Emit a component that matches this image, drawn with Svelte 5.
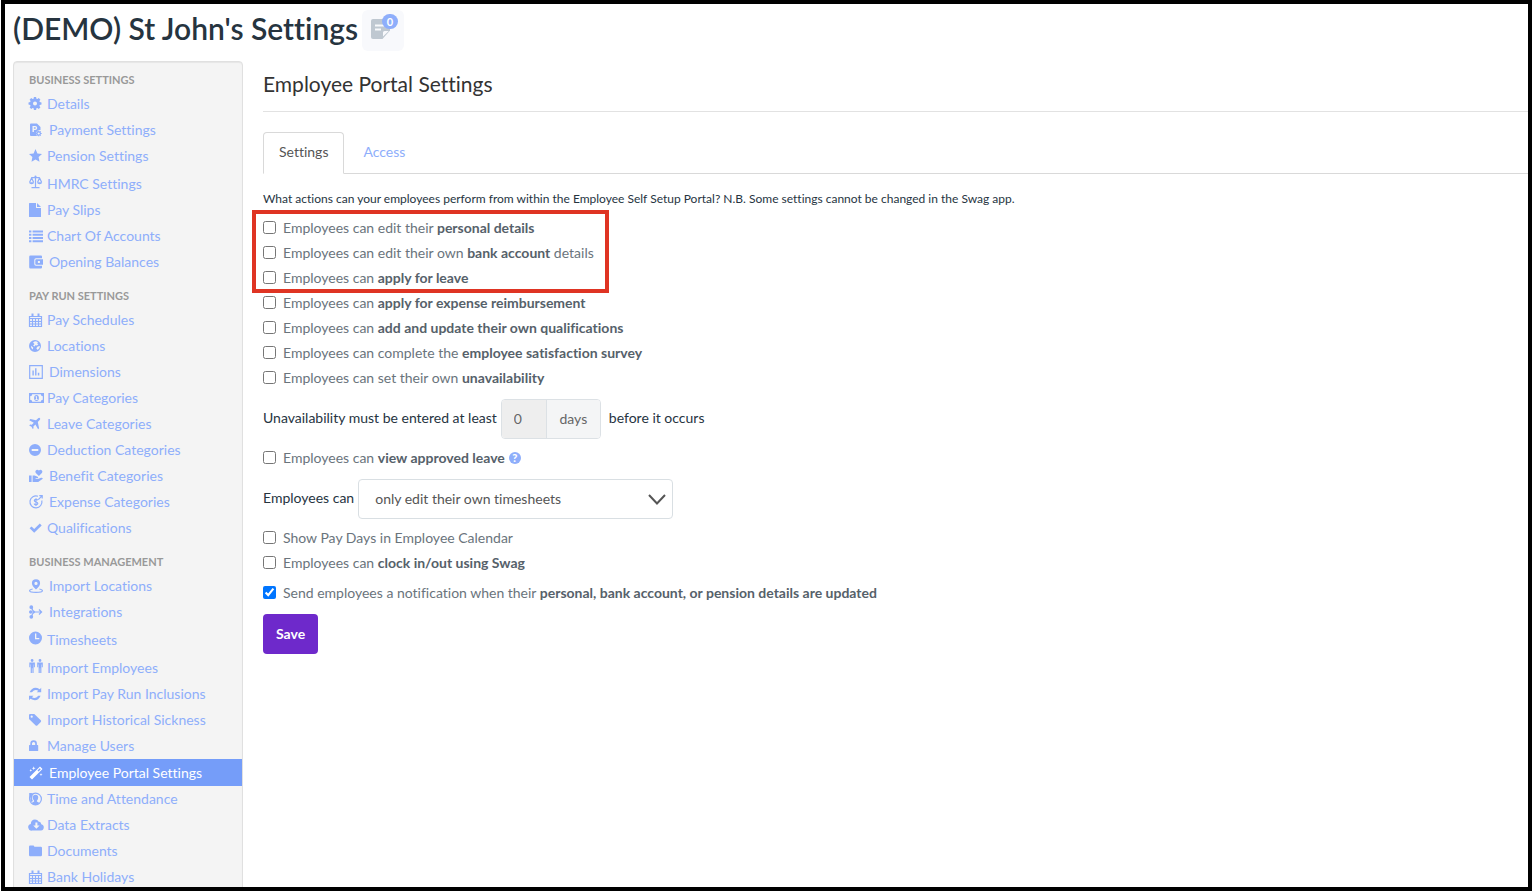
<script>
  // f = filled outline, s = stroked outline, both on a 14px grid
  const icons = {
    cog: { f: 'M4.900 0h2.200l.3 1.700 1 .4 1.400-1 1.600 1.600-1 1.400.4 1 1.700.3v2.200l-1.700.3-.4 1 1 1.400-1.600 1.600-1.400-1-1 .4-.3 1.700H4.900l-.3-1.700-1-.4-1.400 1L.6 10.300l1-1.400-.4-1L-.5 7.600V5.400l1.700-.3.4-1-1-1.400L2.200 1.100l1.400 1 1-.4zM6 4.500a2 2 0 1 0 0 4 2 2 0 0 0 0-4z' },
    payment: { f: 'M1 1.500Q1 .5 2 .5h6l3.500 3.500v3L9.500 7Q7 8 7.200 10.500L7.800 13H2Q1 13 1 12zM3.500 3v6h1.400V7h1.300a2 2 0 0 0 0-4zM4.900 4.200h1.200q.8 0 .8.8t-.8.800H4.900z', s: 'M9.700 8.800a1.700 1.700 0 1 0 0 3.400 1.700 1.700 0 0 0 0-3.400zM9.700 7.600v1M9.700 12.300v1M6.800 10.500h1M11.700 10.500h1M7.700 8.400l.7.7M11 11.900l.7.7M11.700 8.400l-.7.7M8.400 11.900l-.7.7' },
    star: { f: 'M6.500 0l1.900 4.400 4.600.5-3.400 3.200.9 4.700-4-2.400-4 2.400.9-4.700L0 4.900l4.600-.5z' },
    scales: { s: 'M6.500 1v11M2.500 12.600h8M2.200 2.600h8.600M2.600 3L.6 7.200M2.600 3l2 4.200M10.600 3L8.600 7.200M10.600 3l2 4.200', f: 'M0 7.200h5.200Q4.900 9.200 2.600 9.200T0 7.200zM8 7.200h5.200q-.3 2-2.600 2T8 7.200zM5.500 1.500a1 1 0 1 1 2 0 1 1 0 0 1-2 0z' },
    file: { f: 'M0 .6Q0 0 .6 0H7v4.400q0 .6.6.600H12v8.400q0 .6-.6.600H.6q-.6 0-.6-.6zM8 0l4 4H8z' },
    list: { f: 'M0 1.500h2.400v2H0zM3.600 1.500H14v2H3.600zM0 4.800h2.400v2H0zM3.600 4.800H14v2H3.600zM0 8h2.400v2H0zM3.600 8H14v2H3.600zM0 11.200h2.400v2H0zM3.600 11.200H14v2H3.600z' },
    wallet: { f: 'M1.500.5h10.500q1 0 1 1v1.800H7Q5.300 3.300 5.300 5v4q0 1.700 1.700 1.700h6v1.800q0 1-1 1H1.500q-1.300 0-1.300-1.300V1.800Q.2.5 1.500.5zM7.300 4.300H14v5.400H7.300Q6.300 9.700 6.300 8.700V5.300q0-1 1-1zM8.900 5.900v2.200h2V5.900z' },
    calendar: { s: 'M.5 3.500h12v10H.5zM.5 5.500h12M.5 8.500h12M.5 11h12M3.500 5.500v8M6.500 5.500v8M9.500 5.500v8', f: 'M2.500.5h2v3h-2zM8.500.5h2v3h-2z' },
    globe: { f: 'M6 1a6 6 0 1 0 0 12A6 6 0 0 0 6 1zM7 2.200L9 3.200 8 4.500l1.500.4L8 6.500 6.300 6.300 5.600 7.500l-1.500-.8L5.500 5 4 3.500 5.500 2.400zM8.700 7.500l2.200-.5-.4 2-1.800 2-1.400-1.800zM2 6.800l2.200 1.700-.3 1.900-1.600-1.500z' },
    chart: { s: 'M.7.7h12.600v12.600H.7z', f: 'M3.400 5.500h1.400v5H3.400zM6.100 3.300h1.400v7.200H6.100zM8.800 7.800h1.500v2.700H8.800z' },
    money: { w: 15, f: 'M0 2h15v10H0zM3.200 3.300a2 2 0 0 1-2 2v3.400a2 2 0 0 1 2 2h8.600a2 2 0 0 1 2-2V5.300a2 2 0 0 1-2-2zM7.500 4q2.400 0 2.400 3t-2.400 3-2.400-3 2.400-3zM6.600 5.500v.8h.5v1.900h-.8v.8h2.500v-.8H8V5.300h-.8z' },
    plane: { f: 'M11 1.200q.7.700-.3 1.900L8.800 5l1.300 6.200-1 1-2.700-4.700-2 2 .2 1.700-.9.9-1.200-2.300L.2 8.500l.9-.9 1.700.2 2-2L.2 3.200l1.100-1.100L7 3.300l1.900-1.900q1.300-1 2.100-.2z' },
    minus: { f: 'M6 .9a6 6 0 1 0 0 12 6 6 0 0 0 0-12zM2.700 5.900h6.600v2.200H2.700z' },
    benefit: { f: 'M0 6.500h2.600V13H0zM3.600 6.500h2l3 1.200q.8.400.4 1.300H6.600v.8h3L12 8.700q1.500-.3 1.800 1L9.200 13H3.600zM9.900 7L6.800 4q-1-1.300 0-2.600 1.400-1.400 3.100.2 1.700-1.600 3-.2 1.100 1.300 0 2.600z' },
    expense: { s: 'M9 1.200A6 6 0 1 0 12.800 5.500M9.300 4.700L13 .8M10.300.7h2.900v2.900M8.700 5.300Q8.300 4.400 7 4.400q-1.700 0-1.700 1.200Q5.300 6.700 7 7q1.800.3 1.800 1.500T7 9.800q-1.600 0-1.900-1.100M7 3.300v7.600' },
    check: { f: 'M.6 7.300l1.900-1.900 2.700 2.500 5.600-5.400 1.900 1.900-7.500 7.300z' },
    pin: { f: 'M7 .2a4.100 4.100 0 0 1 4.100 4.100Q11 7 7 10.500 3 7 2.900 4.300A4.100 4.100 0 0 1 7 .2zM7 2.800a1.600 1.600 0 1 0 0 3.200 1.600 1.600 0 0 0 0-3.200z', s: 'M3.600 10Q.6 10.600.6 11.700q0 1.600 6.400 1.600t6.400-1.600q0-1.100-3-1.700' },
    merge: { s: 'M2.500 2.200Q3 5.800 6 7h6.500M2.500 11.800Q3 8.200 6 7M2 7h5M10 4.500L12.600 7l-2.600 2.500', f: 'M.4 2.200a1.900 1.900 0 1 1 3.800 0 1.900 1.900 0 0 1-3.800 0zM0 7a1.700 1.700 0 1 1 3.400 0A1.700 1.700 0 0 1 0 7zM.4 11.800a1.900 1.900 0 1 1 3.800 0 1.900 1.900 0 0 1-3.800 0z' },
    clock: { f: 'M6.500.5a6.500 6.500 0 1 0 0 13 6.500 6.500 0 0 0 0-13zM6 2.600h1.300v4.400h3v1.200H6z' },
    people: { f: 'M1.700 1.500a1.400 1.400 0 1 1 2.800 0 1.400 1.400 0 0 1-2.800 0zM.3 3.400h5.600V8.300H4.900V5.500h-.3V14H3.400V9.200h-.5V14H1.700V5.500h-.4v2.800h-1zM9.600 1.500a1.400 1.400 0 1 1 2.800 0 1.400 1.400 0 0 1-2.800 0zM8.200 3.400h5.600V8.300h-1V5.500h-.4V14h-1.200V9.200h-.4V14H9.600V5.500h-.4v2.800h-1z' },
    refresh: { f: 'M12.200.8v4.500H7.700l1.600-1.600q-3.400-2.200-6.400 1.600H.6Q4-1.800 10.800 2.200zM0 13.200V8.700h4.500l-1.600 1.600q3.400 2.200 6.400-1.600h2.300Q8.200 15.800 1.400 11.800z' },
    tag: { f: 'M0 2.100Q0 1 1.100 1h4.200l6.500 6.300q.8.800 0 1.600l-3.500 3.500q-.8.800-1.600 0L0 6zM2.700 2.600a1.100 1.100 0 1 0 0 2.200 1.100 1.100 0 0 0 0-2.200z' },
    lock: { f: 'M.6 6h.7V4.500a3.300 3.300 0 0 1 6.600 0V6h.7q.6 0 .6.600V11.400q0 .6-.6.600H.6q-.6 0-.6-.6V6.600Q0 6 .6 6zM3 6h3.200V4.500a1.600 1.600 0 0 0-3.200 0z' },
    wand: { f: 'M11 .5L13.500 3 3 13.500.5 11zM10.800 2.200L8.500 4.500l1 1 2.300-2.300zM4.700.3l.5 1.500 1.500.5-1.500.5-.5 1.500-.5-1.500-1.500-.5 1.500-.5zM1.800 3l.4 1 1 .4-1 .4-.4 1-.4-1-1-.4 1-.4zM12 7l.4 1.200 1.200.4-1.200.4L12 10.200l-.4-1.200-1.200-.4 1.200-.4z' },
    user: { s: 'M6.500 1.100a5.900 5.900 0 1 0 0 11.800 5.900 5.900 0 0 0 0-11.800z', f: 'M6.500 2.800Q9.200 2.900 9.200 5.600 9.200 7.700 7.900 8.700v.8l2.700 1.400Q8.900 13 6.500 13T2.400 10.900l2.700-1.400v-.8Q3.800 7.700 3.800 5.600 3.800 2.900 6.500 2.800zM.2 1H3.500L1.500 3.500V9L.2 6zM1.500 3.500Q3 1.200 5.500 1.200 3.300 2.600 3.200 5.500T4 9L2.200 10Q.2 7 1.500 3.500z' },
    cloud: { w: 15, f: 'M3.300 12.500A3.300 3.300 0 0 1 1.800 6Q2 1.600 6 1.500q2.600 0 3.800 2.200Q12 3.300 12.300 6.200 15 7 14.800 9.600 14.500 12.500 12 12.500zM6.400 4.500v3H4.200l3.200 3.300 3.200-3.300H8.400v-3z' },
    folder: { f: 'M0 2.700Q0 1.500 1.200 1.500h2.900q1.200 0 1.200 1.300h6.400q1.300 0 1.300 1.200v7q0 1.300-1.300 1.300H1.300Q0 12.300 0 11z' }
  };

  // wide = svg icon set with a bigger gap, tall = icon that is higher than the text line
  const menu = [
    {
      title: 'Business Settings',
      items: [
        { label: 'Details', icon: 'cog' },
        { label: 'Payment Settings', icon: 'payment', wide: true },
        { label: 'Pension Settings', icon: 'star' },
        { label: 'HMRC Settings', icon: 'scales', tall: true },
        { label: 'Pay Slips', icon: 'file' },
        { label: 'Chart Of Accounts', icon: 'list' },
        { label: 'Opening Balances', icon: 'wallet', wide: true }
      ]
    },
    {
      title: 'Pay Run Settings',
      items: [
        { label: 'Pay Schedules', icon: 'calendar' },
        { label: 'Locations', icon: 'globe' },
        { label: 'Dimensions', icon: 'chart', wide: true },
        { label: 'Pay Categories', icon: 'money' },
        { label: 'Leave Categories', icon: 'plane' },
        { label: 'Deduction Categories', icon: 'minus' },
        { label: 'Benefit Categories', icon: 'benefit', wide: true },
        { label: 'Expense Categories', icon: 'expense', wide: true },
        { label: 'Qualifications', icon: 'check' }
      ]
    },
    {
      title: 'Business Management',
      items: [
        { label: 'Import Locations', icon: 'pin', wide: true },
        { label: 'Integrations', icon: 'merge', wide: true },
        { label: 'Timesheets', icon: 'clock', tall: true },
        { label: 'Import Employees', icon: 'people', tall: true },
        { label: 'Import Pay Run Inclusions', icon: 'refresh' },
        { label: 'Import Historical Sickness', icon: 'tag' },
        { label: 'Manage Users', icon: 'lock' },
        { label: 'Employee Portal Settings', icon: 'wand', wide: true, active: true },
        { label: 'Time and Attendance', icon: 'user' },
        { label: 'Data Extracts', icon: 'cloud' },
        { label: 'Documents', icon: 'folder' },
        { label: 'Bank Holidays', icon: 'calendar' }
      ]
    }
  ];

  let highlighted = $state([
    { before: 'Employees can edit their ', bold: 'personal details', on: false },
    { before: 'Employees can edit their own ', bold: 'bank account', after: ' details', on: false },
    { before: 'Employees can ', bold: 'apply for leave', on: false }
  ]);
  let permissions = $state([
    { before: 'Employees can ', bold: 'apply for expense reimbursement', on: false },
    { before: 'Employees can ', bold: 'add and update their own qualifications', on: false },
    { before: 'Employees can complete the ', bold: 'employee satisfaction survey', on: false },
    { before: 'Employees can set their own ', bold: 'unavailability', on: false }
  ]);
  let approvedLeave = $state({ before: 'Employees can ', bold: 'view approved leave', help: true, on: false });
  let calendarOptions = $state([
    { before: 'Show Pay Days in Employee Calendar', on: false },
    { before: 'Employees can ', bold: 'clock in/out using Swag', on: false }
  ]);
  let notification = $state({
    before: 'Send employees a notification when their ',
    bold: 'personal, bank account, or pension details are updated',
    on: true
  });
</script>

{#snippet option(item)}
  <div class="option">
    <label>
      <input type="checkbox" bind:checked={item.on} />
      <span>{item.before}{#if item.bold}<strong>{item.bold}</strong>{/if}{item.after ?? ''}</span>
    </label>
    {#if item.help}
      <button type="button" class="help" aria-label="Help">?</button>
    {/if}
  </div>
{/snippet}

<div class="frame">
  <header>
    <h1>(DEMO) St John's Settings</h1>
    <button type="button" class="notes" aria-label="Notes">
      <svg width="22" height="22" viewBox="0 0 22 22">
        <path fill="#bfc8d1" d="M3 1h15q2 0 2 2v9.500L12.500 21H3q-2 0-2-2V3q0-2 2-2z" />
        <path fill="#f8f9fc" d="M13 18.500v-4q0-1.500 1.500-1.500h4.200zM5 6.500h10v2H5zM5 10.500h6v2H5z" />
      </svg>
      <span class="count">0</span>
    </button>
  </header>

  <div class="layout">
    <nav>
      {#each menu as group}
        <section>
          <h2>{group.title}</h2>
          <ul>
            {#each group.items as item}
              <li>
                <a href="#settings" class:wide={item.wide} class:tall={item.tall} class:active={item.active}>
                  <svg width={icons[item.icon].w ?? 14} height="14" viewBox="0 0 {icons[item.icon].w ?? 14} 14" aria-hidden="true">
                    {#if icons[item.icon].f}
                      <path class="solid" d={icons[item.icon].f} />
                    {/if}
                    {#if icons[item.icon].s}
                      <path class="line" d={icons[item.icon].s} />
                    {/if}
                  </svg>
                  <span>{item.label}</span>
                </a>
              </li>
            {/each}
          </ul>
        </section>
      {/each}
    </nav>

    <main>
      <h2 class="page-title">Employee Portal Settings</h2>

      <div class="tabs">
        <a href="#settings" class="tab current">Settings</a>
        <a href="#access" class="tab">Access</a>
      </div>

      <form>
        <p class="intro">
          What actions can your employees perform from within the Employee Self Setup Portal? N.B. Some settings cannot be changed in the Swag app.
        </p>

        <div class="highlight">
          {#each highlighted as item}
            {@render option(item)}
          {/each}
        </div>
        {#each permissions as item}
          {@render option(item)}
        {/each}

        <div class="field-row">
          <label for="notice-days">Unavailability must be entered at least</label>
          <div class="input-group">
            <input id="notice-days" type="text" value="0" disabled />
            <span class="addon">days</span>
          </div>
          <span class="suffix">before it occurs</span>
        </div>

        {@render option(approvedLeave)}

        <div class="field-row">
          <label for="timesheet-access">Employees can</label>
          <div class="select-box">
            <select id="timesheet-access">
              <option>only edit their own timesheets</option>
            </select>
            <svg width="18" height="11" viewBox="0 0 18 11" aria-hidden="true">
              <path d="M1 1l8 8.500L17 1" />
            </svg>
          </div>
        </div>

        {#each calendarOptions as item}
          {@render option(item)}
        {/each}
        <div class="notification">
          {@render option(notification)}
        </div>

        <button type="button" class="save">Save</button>
      </form>
    </main>
  </div>
</div>

<style>
  :global(body) {
    background: #fff;
    overflow: hidden;
  }

  .frame {
    box-sizing: border-box;
    height: calc(100vh - 1px);
    margin: 0 2px 0 1px;
    padding-left: 8px;
    border: 4px solid #000;
    overflow: hidden;
    color: #26343f;
    font-family: Lato, "Liberation Sans", sans-serif;
    font-size: 14px;
    line-height: 20px;
    font-variant-ligatures: none;
  }

  h1, h2, p, ul {
    margin: 0;
    padding: 0;
  }

  a {
    color: #8eaefb;
    text-decoration: none;
  }

  button, input, select {
    margin: 0;
    font: inherit;
  }

  header {
    display: flex;
    gap: 4px;
    padding: 6px 0 10px;
  }

  h1 {
    font-size: 30px;
    font-weight: 600;
    line-height: 36px;
  }

  .notes {
    position: relative;
    width: 42px;
    height: 41px;
    padding: 0 0 4px 8px;
    border: 0;
    border-radius: 6px;
    background: #f8f9fc;
  }

  .notes svg {
    display: block;
  }

  .count {
    position: absolute;
    top: 4px;
    right: 6px;
    padding: 0 5px;
    border-radius: 8px;
    background: #8eaefb;
    color: #fff;
    font-size: 11px;
    font-weight: 700;
    line-height: 15px;
  }

  .layout {
    display: grid;
    grid-template-columns: 230px 1fr;
    gap: 20px;
  }

  /* sidebar */
  nav {
    box-sizing: border-box;
    padding: 7px 0 20px;
    border: 1px solid #e0e0e0;
    border-radius: 4px;
    background: #f4f4f4;
    box-shadow: inset 0 1px 1px #e6e6e6;
  }

  section + section {
    margin-top: 10px;
  }

  nav h2 {
    padding-left: 15px;
    color: #999;
    font-size: 11px;
    font-weight: 700;
    line-height: 22px;
    text-transform: uppercase;
  }

  ul {
    list-style: none;
  }

  nav a {
    display: grid;
    grid-template-columns: 18px 1fr;
    align-items: center;
    padding: 3px 15px;
  }

  nav a.wide {
    grid-template-columns: 20px 1fr;
  }

  nav a.tall {
    padding-top: 5px;
  }

  nav a.tall svg {
    margin-bottom: 4px;
  }

  nav a.active {
    padding-top: 4px;
    background: #759df9;
    color: #fff;
  }

  nav svg {
    overflow: visible;
  }

  .solid {
    fill: currentColor;
    fill-rule: evenodd;
  }

  .line {
    fill: none;
    stroke: currentColor;
    stroke-width: 1.2;
  }

  /* main panel */
  .page-title {
    padding: 10px 0 14px;
    border-bottom: 1px solid #e2e2e2;
    color: #333;
    font-size: 21px;
    font-weight: 400;
    line-height: 26px;
  }

  .tabs {
    display: flex;
    margin-top: 20px;
    border-bottom: 1px solid #d9d9d9;
  }

  .tab {
    margin-bottom: -1px;
    padding: 9px 18px 11px;
    border: 1px solid transparent;
  }

  .current {
    padding: 9px 15px 11px;
    border-color: #d9d9d9 #d9d9d9 #fff;
    border-radius: 4px 4px 0 0;
    background: #fff;
    color: #555;
  }

  form {
    padding-top: 15px;
  }

  .intro {
    margin-bottom: 6px;
    font-size: 12px;
  }

  .highlight {
    position: relative;
    width: fit-content;
  }

  .highlight::after {
    content: '';
    position: absolute;
    inset: -5px -15px -3px -11px;
    border: 4px solid #df3423;
    pointer-events: none;
  }

  .option {
    display: flex;
    align-items: center;
    gap: 4px;
    height: 25px;
    color: #6a747c;
  }

  .option label {
    display: flex;
    align-items: center;
    gap: 7px;
  }

  .option input {
    width: 13px;
    height: 13px;
  }

  strong {
    color: #56616a;
    font-weight: 700;
  }

  .help {
    width: 12px;
    height: 12px;
    padding: 0;
    border: 0;
    border-radius: 50%;
    background: #8eaefb;
    color: #fff;
    font-size: 11px;
    font-weight: 900;
    line-height: 12px;
  }

  .field-row {
    display: flex;
    align-items: center;
    gap: 4px;
    margin: 9px 0 6px;
  }

  .field-row label,
  .suffix {
    padding-bottom: 3px;
  }

  .input-group {
    display: flex;
    box-sizing: border-box;
    width: 100px;
    height: 40px;
    border: 1px solid #dce1e5;
    border-radius: 4px;
    overflow: hidden;
    color: #666;
  }

  .input-group input {
    box-sizing: border-box;
    width: 45px;
    padding: 0 12px;
    border: 0;
    border-right: 1px solid #dce1e5;
    background: #eee;
    color: #666;
  }

  .addon {
    flex: 1;
    background: #f4f5f6;
    line-height: 38px;
    text-align: center;
  }

  .suffix {
    padding-left: 4px;
  }

  .select-box {
    display: grid;
    align-items: center;
    width: 315px;
  }

  .select-box select,
  .select-box svg {
    grid-area: 1 / 1;
  }

  .select-box select {
    appearance: none;
    height: 40px;
    padding: 0 16px;
    border: 1px solid #d9dfe3;
    border-radius: 4px;
    background: #fff;
    color: #555;
  }

  .select-box svg {
    justify-self: end;
    margin-right: 7px;
    fill: none;
    stroke: #555;
    stroke-width: 2;
    pointer-events: none;
  }

  .notification {
    margin: 5px 0 9px;
  }

  .save {
    height: 40px;
    padding: 0 13px;
    border: 0;
    border-radius: 4px;
    background: #6e29cb;
    color: #fff;
    font-weight: 700;
  }
</style>
